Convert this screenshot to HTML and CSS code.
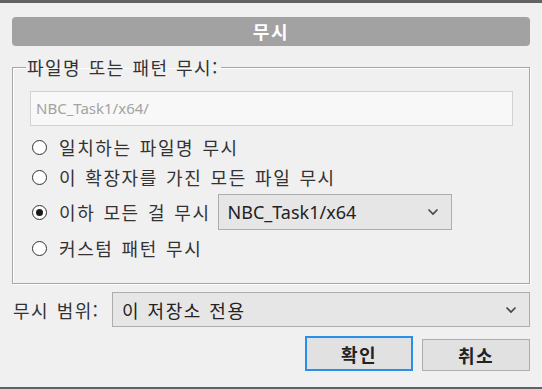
FILE: index.html
```html
<!DOCTYPE html>
<html lang="ko">
<head>
    <meta charset="UTF-8">
    <meta name="viewport" content="width=device-width, initial-scale=1.0">
    <title>무시</title>
    <link rel="stylesheet" href="styles.css">
</head>
<body>
    <div class="dialog">
        <header class="title-bar">무시</header>

        <fieldset class="pattern-group">
            <legend>파일명 또는 패턴 무시:</legend>
            <div class="text-box">NBC_Task1/x64/</div>

            <div class="option">
                <span class="radio"></span>
                <span>일치하는 파일명 무시</span>
            </div>
            <div class="option">
                <span class="radio"></span>
                <span>이 확장자를 가진 모든 파일 무시</span>
            </div>
            <div class="option option-combo">
                <span class="radio checked"></span>
                <span>이하 모든 걸 무시</span>
                <div class="combo folder-combo">
                    <span>NBC_Task1/x64</span>
                    <svg class="chevron" width="12" height="8" viewBox="0 0 12 8"><path d="M1.5 1.5 L6 6 L10.5 1.5" fill="none" stroke="#444" stroke-width="1.6"/></svg>
                </div>
            </div>
            <div class="option">
                <span class="radio"></span>
                <span>커스텀 패턴 무시</span>
            </div>
        </fieldset>

        <div class="scope-row">
            <span class="scope-label">무시 범위:</span>
            <div class="combo scope-combo">
                <span>이 저장소 전용</span>
                <svg class="chevron" width="12" height="8" viewBox="0 0 12 8"><path d="M1.5 1.5 L6 6 L10.5 1.5" fill="none" stroke="#444" stroke-width="1.6"/></svg>
            </div>
        </div>

        <div class="buttons">
            <button class="btn btn-default">확인</button>
            <button class="btn">취소</button>
        </div>
    </div>
</body>
</html>
```

FILE: styles.css
```css
html, body {
    margin: 0;
    padding: 0;
}

body {
    font-family: 'Noto Sans CJK KR', 'Noto Sans', sans-serif;
    font-size: 18px;
    letter-spacing: 1.6px;
    word-spacing: 1.5px;
    color: #222;
    background-color: #f0f0f0;
}

.dialog {
    box-sizing: border-box;
    height: 389px;
    padding: 14px 12px 0 12px;
    border-top: 3px solid #626262;
    border-bottom: 2px solid #626262;
}

.title-bar {
    height: 29px;
    line-height: 29px;
    background-color: #a2a2a2;
    border-radius: 4px;
    color: white;
    font-weight: bold;
    text-align: center;
}

.pattern-group {
    margin: 10px 0 0 0;
    padding: 0 16px 20px 17px;
    border: 1px solid #a7a7a7;
    box-shadow: inset 1px 1px 0 #fff, 1px 1px 0 #fff;
    min-width: 0;
}

.pattern-group legend {
    margin-left: -4px;
    padding: 0 2px 0 1px;
    line-height: 22px;
    color: #333;
    letter-spacing: 1.5px;
    word-spacing: 1px;
}

.text-box {
    box-sizing: border-box;
    height: 35px;
    margin-top: 13px;
    padding-left: 5px;
    line-height: 33px;
    background-color: #f8f8f8;
    border: 1px solid #d2d2d2;
    color: #a3a3a3;
    font-family: 'Noto Sans', 'Noto Sans CJK KR', sans-serif;
    font-size: 15px;
    letter-spacing: 0;
    word-spacing: 0;
}

.option {
    display: flex;
    align-items: center;
    height: 30px;
    margin-top: 6px;
    color: #333;
}

.option + .option {
    margin-top: 0;
}

.option.option-combo {
    height: 36px;
    margin-top: 2px;
    margin-bottom: 3px;
}

.radio {
    box-sizing: border-box;
    width: 15px;
    height: 15px;
    margin: 0 12px 0 2px;
    border: 1px solid #333;
    border-radius: 50%;
    background: white;
    display: flex;
    align-items: center;
    justify-content: center;
}

.radio.checked::after {
    content: '';
    width: 7px;
    height: 7px;
    border-radius: 50%;
    background: #1a1a1a;
}

.combo {
    box-sizing: border-box;
    display: flex;
    align-items: center;
    justify-content: space-between;
    background-color: #e6e6e6;
    border: 1px solid #adadad;
    padding: 0 12px 0 9px;
    color: #222;
    font-family: 'Noto Sans', 'Noto Sans CJK KR', sans-serif;
    letter-spacing: 0;
    word-spacing: 0;
}

.folder-combo {
    width: 234px;
    height: 36px;
    margin-left: 7px;
    font-size: 18px;
}

.scope-row {
    display: flex;
    align-items: center;
    margin-top: 8px;
}

.scope-label {
    width: 99px;
    padding-left: 1px;
    color: #333;
    letter-spacing: 1.5px;
    word-spacing: 1px;
}

.scope-combo {
    flex: 1;
    height: 35px;
    font-family: 'Noto Sans CJK KR', sans-serif;
    letter-spacing: 1.5px;
    word-spacing: 1px;
}

.buttons {
    display: flex;
    justify-content: flex-end;
    align-items: flex-end;
    gap: 9px;
    margin-top: 9px;
}

.btn {
    box-sizing: border-box;
    width: 108px;
    height: 32px;
    background-color: #e1e1e1;
    border: 1px solid #adadad;
    font-family: 'Noto Sans CJK KR', sans-serif;
    font-size: 18px;
    letter-spacing: 1.5px;
    font-weight: bold;
    color: #222;
    padding: 0;
}

.btn-default {
    height: 35px;
    border: 2px solid #2a8fe8;
}
```
